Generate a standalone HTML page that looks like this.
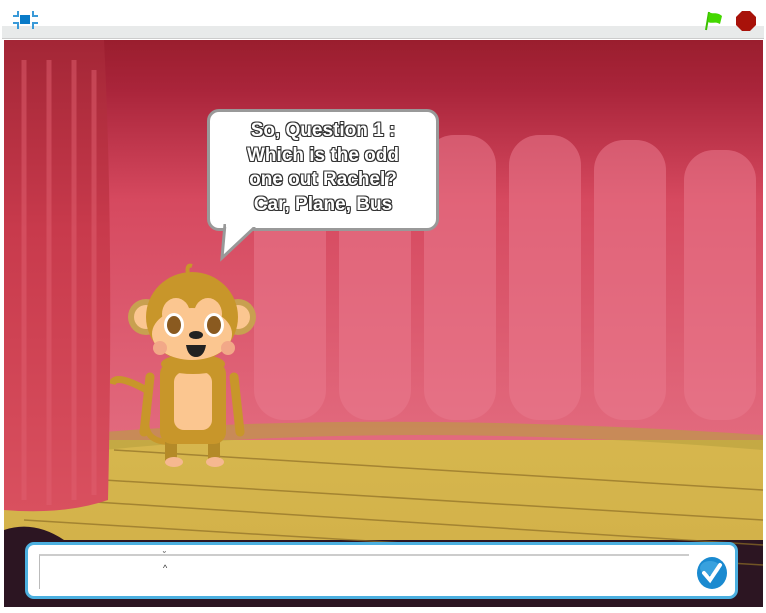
<!DOCTYPE html>
<html><head><style>
html,body{margin:0;padding:0;width:766px;height:613px;overflow:hidden;background:#fff;font-family:"Liberation Sans",sans-serif}
.hdr{position:absolute;left:0;top:0;width:766px;height:26px;background:#fff}
.band{position:absolute;left:2px;top:26px;width:762px;height:12px;background:#e8eaea;border-bottom:1px solid #ccc}
.bub{position:absolute;left:207px;top:109px;width:226px;height:116px;background:#fff;border:3px solid #999;border-radius:12px}
.txt{position:absolute;left:207px;top:119px;width:232px;text-align:center;font-weight:bold;font-size:19px;line-height:24.5px;color:#fff;text-shadow:-1px -1px 0 #333,1px -1px 0 #333,-1px 1px 0 #333,1px 1px 0 #333,0 1px 0 #333,0 -1px 0 #333,1px 0 0 #333,-1px 0 0 #333}
.ans{position:absolute;left:25px;top:542px;width:707px;height:51px;background:#fff;border:3px solid #4cb0e0;border-radius:9px}
.inp{position:absolute;left:39px;top:554px;width:649px;height:33px;border-top:2px solid #ccc;border-left:1px solid #bbb}
</style></head><body>
<div class="hdr"></div>
<div class="band"></div>
<svg style="position:absolute;left:12px;top:9px" width="27" height="22" viewBox="0 0 27 22">
<rect x="8" y="6" width="10" height="9" fill="#0a7bc8"/>
<path d="M1 7H6V2M21 2V7H26M1 14H6V20M21 20V14H26" stroke="#3a9ad8" stroke-width="2" fill="none"/>
</svg>
<svg style="position:absolute;left:702px;top:10px" width="24" height="22" viewBox="0 0 24 22">
<path d="M4 20L7 2" stroke="#3cc000" stroke-width="2"/>
<path d="M7 2C11 5 14 1 20 6L18 14C13 11 10 14 6 12Z" fill="#44d800"/>
</svg>
<svg style="position:absolute;left:735px;top:10px" width="22" height="22" viewBox="0 0 22 22">
<polygon points="7,1 15,1 21,7 21,15 15,21 7,21 1,15 1,7" fill="#a8120a"/>
</svg>
<svg style="position:absolute;left:4px;top:40px" width="759" height="567" viewBox="0 0 759 567">
<defs>
<linearGradient id="cur" x1="0" y1="0" x2="0" y2="1"><stop offset="0" stop-color="#9a1e2e"/><stop offset="0.12" stop-color="#a9243a"/><stop offset="0.4" stop-color="#d6495f"/><stop offset="1" stop-color="#e26a7e"/></linearGradient>
<linearGradient id="fl" x1="0" y1="0" x2="0" y2="1"><stop offset="0" stop-color="#c9a23c"/><stop offset="0.4" stop-color="#dcc055"/><stop offset="1" stop-color="#d3b24a"/></linearGradient>
<linearGradient id="lc" x1="0" y1="0" x2="0" y2="1"><stop offset="0" stop-color="#a32636"/><stop offset="0.4" stop-color="#c83a4c"/><stop offset="1" stop-color="#d9505f"/></linearGradient>
</defs>
<rect width="759" height="567" fill="#2c1522"/>
<rect width="759" height="500" fill="url(#fl)"/>
<rect width="759" height="400" fill="url(#cur)"/>
<g fill="#ea7a8e" opacity="0.55">
<rect x="250" y="110" width="72" height="270" rx="30"/>
<rect x="335" y="100" width="72" height="280" rx="30"/>
<rect x="420" y="95" width="72" height="285" rx="30"/>
<rect x="505" y="95" width="72" height="285" rx="30"/>
<rect x="590" y="100" width="72" height="280" rx="30"/>
<rect x="680" y="110" width="72" height="270" rx="30"/>
</g>
<path d="M100 392Q380 370 759 395V410Q400 380 100 410Z" fill="#b8a040" opacity="0.6"/>
<g stroke="#8f6f26" stroke-width="1.5" opacity="0.7" fill="none">
<path d="M110 410L759 450M100 440L759 480M60 460L759 505M20 480L759 525M0 505L620 555"/>
</g>
<path d="M0 0H100Q110 200 104 460Q60 475 0 470Z" fill="url(#lc)"/>
<g stroke="#e06070" stroke-width="5" opacity="0.5"><path d="M20 20V460M45 20V465M70 20V460M90 30V455"/></g>
<path d="M0 490Q30 480 60 500V567H0Z" fill="#2c1522"/>
</svg>
<svg style="position:absolute;left:110px;top:262px" width="150" height="210" viewBox="0 0 150 210">
<path d="M40 130Q5 110 2 122" stroke="#c8962a" stroke-width="7" fill="none"/>
<path d="M38 150Q30 180 60 180" stroke="#c8962a" stroke-width="6" fill="none"/>
<rect x="55" y="180" width="12" height="20" fill="#b48a28"/><rect x="98" y="180" width="12" height="20" fill="#b48a28"/>
<ellipse cx="64" cy="200" rx="9" ry="5" fill="#f6b890"/><ellipse cx="105" cy="200" rx="9" ry="5" fill="#f6b890"/>
<path d="M40 115L34 170M124 115L130 170" stroke="#c8962a" stroke-width="9" stroke-linecap="round"/>
<rect x="50" y="100" width="66" height="82" rx="12" fill="#c8962a"/>
<rect x="64" y="110" width="38" height="58" rx="10" fill="#fbc690"/>
<ellipse cx="83" cy="102" rx="32" ry="10" fill="#c8962a"/>
<circle cx="36" cy="55" r="18" fill="#c8a050"/><circle cx="36" cy="55" r="12" fill="#fbc690"/>
<circle cx="128" cy="55" r="18" fill="#c8a050"/><circle cx="128" cy="55" r="12" fill="#fbc690"/>
<ellipse cx="82" cy="55" rx="46" ry="45" fill="#c8962a"/>
<path d="M78 12Q76 2 82 4" stroke="#c8962a" stroke-width="4" fill="none"/>
<ellipse cx="82" cy="72" rx="40" ry="26" fill="#fbc690"/>
<ellipse cx="66" cy="52" rx="14" ry="16" fill="#fbc690"/><ellipse cx="98" cy="52" rx="14" ry="16" fill="#fbc690"/>
<ellipse cx="64" cy="63" rx="10" ry="12" fill="#fff"/><ellipse cx="104" cy="63" rx="10" ry="12" fill="#fff"/>
<ellipse cx="64" cy="63" rx="7" ry="9" fill="#8a5a20"/><ellipse cx="104" cy="63" rx="7" ry="9" fill="#8a5a20"/>
<circle cx="50" cy="86" r="7" fill="#f2a888"/><circle cx="118" cy="86" r="7" fill="#f2a888"/>
<ellipse cx="86" cy="73" rx="7" ry="4" fill="#222"/>
<path d="M76 83H96Q94 95 86 95Q78 95 76 83Z" fill="#222"/>
</svg>
<div class="bub"></div>
<svg style="position:absolute;left:215px;top:224px" width="50" height="38" viewBox="0 0 50 38">
<path d="M10 0L7 34L40 3" fill="#fff" stroke="#999" stroke-width="3"/>
<rect x="11" y="0" width="30" height="3" fill="#fff"/>
</svg>
<div class="txt">So, Question 1 :<br>Which is the odd<br>one out Rachel?<br>Car, Plane, Bus</div>
<div class="ans"></div>
<div class="inp"></div>
<div style="position:absolute;left:163px;top:550px;font-size:9px;color:#333">˘</div>
<div style="position:absolute;left:163px;top:563px;font-size:9px;color:#333">^</div>
<svg style="position:absolute;left:695px;top:556px" width="34" height="34" viewBox="0 0 34 34">
<ellipse cx="17" cy="17" rx="15" ry="16" fill="#1a8ad0"/>
<ellipse cx="15" cy="12" rx="10" ry="7" fill="#4cb0e8" opacity="0.6"/>
<path d="M9 17L15 24L25 9" stroke="#fff" stroke-width="4" fill="none" stroke-linecap="round"/>
</svg>
</body></html>
